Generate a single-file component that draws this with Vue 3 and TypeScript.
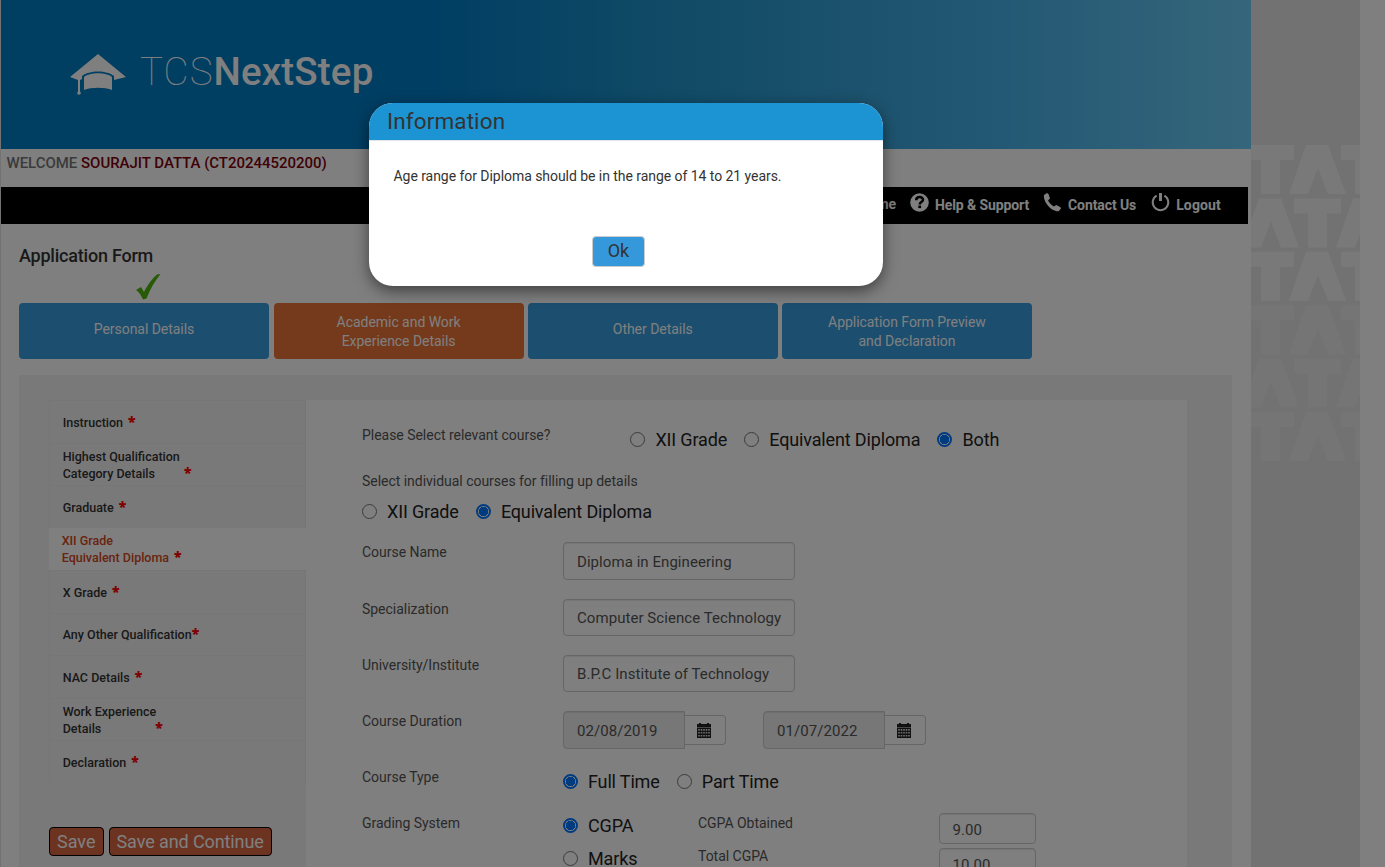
<script setup lang="ts">
interface Option { label: string; on: boolean }
interface MenuItem { lines: string[]; gap: number; active?: boolean; height: number }

const tabs = [
  { lines: ['Personal Details'], active: false },
  { lines: ['Academic and Work', 'Experience Details'], active: true },
  { lines: ['Other Details'], active: false },
  { lines: ['Application Form Preview', 'and Declaration'], active: false },
]
const menu: MenuItem[] = [
  { lines: ['Instruction'], gap: 5, height: 43 },
  { lines: ['Highest Qualification', 'Category Details'], gap: 29, height: 42 },
  { lines: ['Graduate'], gap: 5, height: 43 },
  { lines: ['XII Grade', 'Equivalent Diploma'], gap: 5, height: 42, active: true },
  { lines: ['X Grade'], gap: 5, height: 43 },
  { lines: ['Any Other Qualification'], gap: 0, height: 42 },
  { lines: ['NAC Details'], gap: 5, height: 43 },
  { lines: ['Work Experience', 'Details'], gap: 54, height: 42 },
  { lines: ['Declaration'], gap: 5, height: 43 },
]
const relevant: Option[] = [
  { label: 'XII Grade', on: false },
  { label: 'Equivalent Diploma', on: false },
  { label: 'Both', on: true },
]
const individual: Option[] = [
  { label: 'XII Grade', on: false },
  { label: 'Equivalent Diploma', on: true },
]
const courseType: Option[] = [
  { label: 'Full Time', on: true },
  { label: 'Part Time', on: false },
]
const fields = [
  { label: 'Course Name', value: 'Diploma in Engineering' },
  { label: 'Specialization', value: 'Computer Science Technology' },
  { label: 'University/Institute', value: 'B.P.C Institute of Technology' },
]
const dates = ['02/08/2019', '01/07/2022']
const tataRows = [0, 1, 2, 3, 4, 5]
</script>

<template>
  <div class="screen">
    <div class="page">
      <main class="site">
        <header class="banner">
          <svg class="cap" width="58" height="42" viewBox="0 0 58 42">
            <path d="M29 0 57 23 45 26V22C38 16 20 16 13 22V25L11 26V38H9V26L1 23Z" />
            <path d="M15 23C21 18 37 18 43 23V36C36 33 22 33 15 36Z" />
            <circle cx="10" cy="39" r="1.8" />
          </svg>
          <div class="brand"><span class="thin">TCS</span><b>NextStep</b></div>
        </header>
        <div class="welcome"><span>WELCOME</span> <b>SOURAJIT DATTA (CT20244520200)</b></div>
        <nav class="nav">
          <a class="home">Home</a>
          <a class="help">
            <svg width="19" height="19" viewBox="0 0 19 19">
              <circle cx="9.5" cy="9.5" r="9.3" fill="#fff" />
              <path d="M6.2 7.2C6.2 3 13 3 13 6.8 13 9.2 9.7 8.9 9.7 11.4" fill="none" stroke="#000" stroke-width="2.5" />
              <rect x="8.3" y="12.6" width="2.8" height="2.5" fill="#000" />
            </svg>
            <span>Help &amp; Support</span>
          </a>
          <a class="contact">
            <svg width="19" height="19" viewBox="0 0 19 19">
              <path d="M1 2 4 0 5.5 1 7 5.5 5 7.5C6.2 10 8.8 12.6 11 13.6L13.2 12 17.5 14.2 18 15.5 15.6 18.2C9 19 0 9.5 1 2Z" fill="#fff" />
            </svg>
            <span>Contact Us</span>
          </a>
          <a class="logout">
            <svg width="19" height="19" viewBox="0 0 19 19">
              <path d="M5.6 2.6A7.8 7.8 0 1 0 13.4 2.6" fill="none" stroke="#fff" stroke-width="2" />
              <path d="M9.5 0V8" stroke="#fff" stroke-width="3" />
            </svg>
            <span>Logout</span>
          </a>
        </nav>

        <section class="content">
          <h1>Application Form</h1>
          <svg class="tick" width="25" height="26" viewBox="0 0 25 26">
            <path d="M0 16 5 13 8 18C12 10 17 4 21 .5L24.5 0C19 7 14 15 10.5 24.5L7 25.5C5 21 3 18 0 16Z" fill="#4cb408" />
          </svg>
          <div class="tabs">
            <div v-for="t in tabs" :key="t.lines[0]" class="tab" :class="{ active: t.active, single: t.lines.length === 1 }">
              <span v-for="l in t.lines" :key="l">{{ l }}</span>
            </div>
          </div>

          <div class="panel">
            <aside class="side">
              <ul class="menu">
                <li v-for="m in menu" :key="m.lines[0]" :class="{ active: m.active }" :style="{ height: m.height + 'px' }">
                  <div v-for="(l, i) in m.lines" :key="l">
                    {{ l }}<i v-if="i === m.lines.length - 1" :style="{ marginLeft: m.gap + 'px' }">*</i>
                  </div>
                </li>
              </ul>
              <div class="actions"><button>Save</button><button>Save and Continue</button></div>
            </aside>

            <form class="form">
              <div class="row r-relevant">
                <label>Please Select relevant course?</label>
                <div class="radios">
                  <span v-for="o in relevant" :key="o.label" class="opt"><em :class="{ on: o.on }" />{{ o.label }}</span>
                </div>
              </div>
              <div class="row r-select"><label>Select individual courses for filling up details</label></div>
              <div class="row radios r-individual">
                <span v-for="o in individual" :key="o.label" class="opt"><em :class="{ on: o.on }" />{{ o.label }}</span>
              </div>
              <div v-for="f in fields" :key="f.label" class="row r-field">
                <label>{{ f.label }}</label>
                <div class="box">{{ f.value }}</div>
              </div>
              <div class="row r-dates">
                <label>Course Duration</label>
                <div v-for="d in dates" :key="d" class="date">
                  <div class="box">{{ d }}</div>
                  <div class="cal">
                    <svg width="14" height="15" viewBox="0 0 14 15">
                      <path d="M0 1H2V0H4V1H10V0H12V1H14V4H0ZM0 4.6H14V15H0Z" fill="#222" />
                      <path d="M1.2 6.9H12.8M1.2 9.8H12.8M1.2 12.7H12.8" stroke="#ddd" stroke-width="1.6" stroke-dasharray="1.6 .9" />
                    </svg>
                  </div>
                </div>
              </div>
              <div class="row r-type">
                <label>Course Type</label>
                <div class="radios">
                  <span v-for="o in courseType" :key="o.label" class="opt"><em :class="{ on: o.on }" />{{ o.label }}</span>
                </div>
              </div>
              <div class="row r-grade">
                <label>Grading System</label>
                <div class="grades">
                  <span class="opt"><em class="on" />CGPA</span>
                  <span class="opt marks"><em />Marks</span>
                </div>
                <div class="captions"><label>CGPA Obtained</label><label>Total CGPA</label></div>
                <div class="scores"><div class="box">9.00</div><div class="box">10.00</div></div>
              </div>
            </form>
          </div>
        </section>
      </main>

      <aside class="strip">
        <svg width="109" height="330" viewBox="0 0 109 330">
          <defs>
            <path id="tee" d="M0 0H47V15H33V49H14V15H0Z" />
            <path id="lambda" d="M17 0H39L57 49H39L29 23 19 49H0Z" />
          </defs>
          <g v-for="r in tataRows" :key="r" :transform="`translate(0 ${r * 53.4})`" :opacity="r < 3 ? 1 : 0.4">
            <template v-if="r % 2 === 0 && r < 3 || r === 3 || r === 5">
              <use href="#tee" x="-4" /><use href="#lambda" x="38" /><use href="#tee" x="90" />
            </template>
            <template v-else>
              <use href="#lambda" x="-9" /><use href="#tee" x="43" /><use href="#lambda" x="85" />
            </template>
          </g>
        </svg>
      </aside>
    </div>

    <div class="overlay">
      <div class="dialog">
        <div class="title">Information</div>
        <p>Age range for Diploma should be in the range of 14 to 21 years.</p>
        <button>Ok</button>
      </div>
    </div>
  </div>
</template>

<style>
html, body { margin: 0; overflow: hidden; }
</style>

<style scoped>
* { box-sizing: border-box; }
.screen { position: relative; width: 1385px; height: 867px; overflow: hidden; font-family: Roboto, "Liberation Sans", sans-serif; color: #333; background: #fff; }
.page { display: flex; height: 867px; }
.site { width: 1251px; flex: none; border-left: 1px solid #e4e4e4; background: #fff; }
.banner { height: 149px; display: flex; align-items: flex-start; background: linear-gradient(90deg, #007cc4 0%, #007cc6 34%, #2296cc 54%, #38a4da 68%, #48b2ea 80%, #6accf6 100%); }
.cap { margin: 54px 0 0 68px; fill: #fff; }
.brand { margin: 48px 0 0 13px; color: #fff; font-size: 38.5px; line-height: 48px; white-space: nowrap; }
.brand .thin { font-weight: 100; letter-spacing: 1.1px; }
.brand b { font-weight: 500; letter-spacing: .18px; }
.welcome { height: 38px; padding: 5px 0 0 5.5px; font-size: 15px; line-height: 18px; font-weight: 500; color: #777; white-space: nowrap; letter-spacing: -.03px; }
.welcome b { font-weight: 500; color: #80000a; }
.nav { width: 1247px; height: 37px; background: #000; display: flex; justify-content: flex-end; padding: 6px 27px 0 0; color: #fff; font-size: 14px; font-weight: 700; letter-spacing: -.1px; white-space: nowrap; }
.nav a { display: flex; }
.nav a span { margin: 3px 0 0 6px; line-height: 18px; }
.home { line-height: 23px; margin-right: 14px; }
.help { margin-right: 14px; }
.contact { margin-right: 15px; }
.logout { letter-spacing: .15px; }
.content { padding-left: 18px; }
h1 { margin: 0; padding-top: 21px; height: 50px; font-size: 18px; line-height: 21px; font-weight: 500; color: #333; letter-spacing: -.22px; }
.tick { display: block; margin-left: 117px; }
.tabs { display: flex; gap: 4.2px; margin-top: 3px; }
.tab { width: 250px; height: 56px; border-radius: 4px; background: #369cde; color: #fff; display: flex; flex-direction: column; align-items: center; justify-content: center; font-size: 14px; line-height: 19px; letter-spacing: -.04px; padding-top: 2px; }
.tab.single { padding: 0 0 3px; }
.tab.active { background: #ea7236; margin-left: .4px; }
.panel { margin-top: 16px; width: 1213px; height: 492px; background: #f2f2f2; display: flex; padding: 25px 0 0 30px; }
.side { width: 257px; flex: none; }
.menu { list-style: none; margin: 0; padding: 0; }
.menu li { border: 1px solid #ededed; border-bottom: 0; padding-left: 12.7px; font-size: 12.5px; line-height: 17px; font-weight: 500; color: #333; display: flex; flex-direction: column; justify-content: center; white-space: nowrap; }
.menu li.active { background: #fff; border-color: #fff; color: #d2481d; padding: 0 0 2px 11.7px; }
.menu i { font-family: "Open Sans", Roboto, sans-serif; font-style: normal; font-weight: 800; color: red; font-size: 14px; line-height: 10px; }
.actions { margin-top: 44px; display: flex; gap: 5px; }
.actions button { height: 29px; border: 1px solid #000; border-radius: 4px; background: #d96642; color: #fff; font: 18px/24px Roboto, sans-serif; padding: 0 7px; white-space: nowrap; }
.actions button + button { letter-spacing: -.1px; width: 163px; }
.form { width: 881px; height: 467px; background: #fff; padding-left: 56px; overflow: hidden; }
.row { display: flex; align-items: flex-start; }
label { font-size: 14px; line-height: 18px; color: #555; width: 201px; flex: none; white-space: nowrap; letter-spacing: -.03px; }
.radios { display: flex; gap: 17.2px; }
.opt { display: flex; align-items: center; font-size: 18px; line-height: 24px; color: #222; white-space: nowrap; letter-spacing: -.15px; }
.opt em { width: 15px; height: 15px; border: 1px solid #767676; border-radius: 50%; margin-right: 10px; flex: none; position: relative; top: -.5px; }
.opt em.on { border: 2px solid #0075ff; background: radial-gradient(circle, #0075ff 0 4.5px, #fff 5px); }
.r-relevant { height: 72px; padding-top: 26px; }
.r-relevant label { width: 268.4px; }
.r-relevant .radios { padding-top: 2px; }
.r-select { height: 27px; }
.r-individual { height: 43px; padding-top: 1px; }
.r-field { height: 56px; }
.r-field label, .r-dates label { padding-top: 1px; }
.box { width: 232px; height: 37px; border: 1px solid #ccc; border-radius: 4px; padding-left: 13px; font-size: 15px; line-height: 37px; color: #555; white-space: nowrap; box-shadow: inset 0 1px 1px rgba(0,0,0,.08); letter-spacing: .06px; }
.r-individual + .r-field { height: 57px; }
.r-individual + .r-field .box { height: 38px; line-height: 38px; }
.r-dates { height: 56.5px; }
.date { display: flex; align-items: center; margin-right: 37px; }
.date .box { width: 122px; height: 38px; line-height: 38px; background: #eee; border-radius: 4px 0 0 4px; }
.cal { width: 41px; height: 30px; border: 1px solid #ccc; border-left: 0; border-radius: 0 4px 4px 0; display: flex; align-items: center; justify-content: center; padding-right: 2px; }
.r-type { height: 45px; }
.r-type .radios { padding-top: 2px; }
.r-grade label { padding-top: 1px; }
.grades { width: 135px; padding-top: 1px; }
.marks { margin-top: 9px; }
.captions { display: flex; flex-direction: column; gap: 14px; width: 241px; }
.scores { display: flex; flex-direction: column; gap: 4px; }
.scores .box { width: 97px; height: 31px; line-height: 32px; padding-left: 12.5px; }
.strip { width: 109px; background: #e5e5e5; padding-top: 145px; }
.strip svg { display: block; fill: #f3f3f3; }
.overlay { position: absolute; inset: 0; background: rgba(0,0,0,.5); padding: 103px 0 0 369px; }
.dialog { width: 514px; height: 183px; border-radius: 24px; overflow: hidden; background: #fff; box-shadow: 0 5px 15px rgba(0,0,0,.5); }
.title { height: 38px; background: #1c94d4; border-bottom: 1px solid #e5e5e5; padding-left: 18px; font-size: 22.5px; line-height: 37px; color: #333; letter-spacing: .12px; }
.dialog p { margin: 26px 0 0 24.5px; font-size: 14px; line-height: 18px; color: #333; height: 69px; letter-spacing: -.05px; }
.dialog button { display: block; margin-left: 223px; width: 53px; height: 31px; padding: 0 0 2px; border: 1px solid #ccc; border-radius: 4px; background: #3598db; color: #333; font: 18px/26px Roboto, sans-serif; }
</style>
